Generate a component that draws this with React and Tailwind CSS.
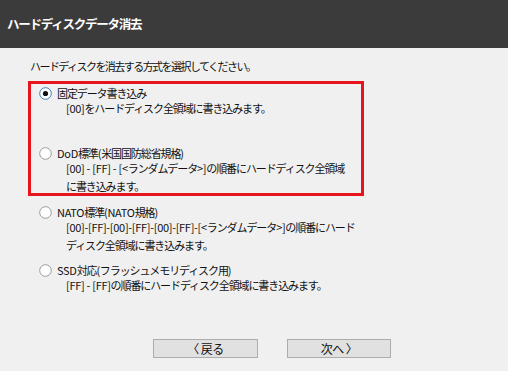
import React from "react";

const font = { fontFamily: '"Noto Sans CJK JP", "Noto Sans", sans-serif' };

function T({ children }) {
  const parts = children.split(/([\x20-\x7e]+)/).filter(Boolean);
  return (
    <>
      {parts.map((p, i) =>
        /^[\x20-\x7e]+$/.test(p) ? (
          <span key={i} className="tracking-[-0.3px] whitespace-pre">{p}</span>
        ) : (
          <span key={i}>{p}</span>
        )
      )}
    </>
  );
}

function Radio({ checked }) {
  return (
    <svg width="13" height="13" viewBox="0 0 13 13" className="shrink-0">
      <circle cx="6.5" cy="6.5" r="5.8" fill="#ffffff" stroke={checked ? "#3c7fb1" : "#9a9a9a"} strokeWidth="1" />
      {checked && <circle cx="6.5" cy="6.5" r="2.6" fill="#111111" />}
    </svg>
  );
}

function Option({ checked, label, lines }) {
  return (
    <div className="flex flex-col">
      <div className="flex items-center h-[12px] gap-[5px]">
        <Radio checked={checked} />
        <span className="text-[11px] leading-[12px] tracking-[-1.1px] text-[#111] whitespace-nowrap"><T>{label}</T></span>
      </div>
      {lines.map((l, i) => (
        <div key={i} className="pl-[27px] h-[18px] flex items-center text-[11px] tracking-[-1.1px] text-[#111] whitespace-nowrap">
          <span><T>{l}</T></span>
        </div>
      ))}
    </div>
  );
}

export default function App() {
  return (
    <div style={font} className="w-[508px] h-[371px] bg-[#f0f0f0] flex flex-col overflow-hidden">
      <div className="h-[48px] bg-[#3b3b3b] flex items-center pl-[7px]">
        <span className="text-white text-[12.5px] font-bold tracking-[-0.1em]">ハードディスクデータ消去</span>
      </div>
      <div className="flex flex-col pl-[28px]">
        <div className="h-[33px] flex items-end pl-[2px] pb-[7px] text-[11px] tracking-[-1.55px] text-[#111]">
          ハードディスクを消去する方式を選択してください。
        </div>
        <div className="w-[336px] h-[115px] border-[3px] border-[#e8141c] box-border pl-[8px] pt-[3px] flex flex-col gap-[30px]">
          <Option checked label="固定データ書き込み" lines={["[00]をハードディスク全領域に書き込みます。"]} />
          <Option
            label="DoD標準(米国国防総省規格)"
            lines={["[00] - [FF] - [<ランダムデータ>]の順番にハードディスク全領域", "に書き込みます。"]}
          />
        </div>
        <div className="pl-[11px] pt-[10px] flex flex-col gap-[10px]">
          <Option
            label="NATO標準(NATO規格)"
            lines={["[00]-[FF]-[00]-[FF]-[00]-[FF]-[<ランダムデータ>]の順番にハード", "ディスク全領域に書き込みます。"]}
          />
          <Option label="SSD対応(フラッシュメモリディスク用)" lines={["[FF] - [FF]の順番にハードディスク全領域に書き込みます。"]} />
        </div>
      </div>
      <div className="mt-[45px] pl-[153px] flex gap-[29px]">
        <div className="w-[105px] h-[19px] border border-[#adadad] bg-[#e1e1e1] flex items-center justify-center text-[12px] tracking-[-0.5px] text-[#111]">
          〈 戻る
        </div>
        <div className="w-[104px] h-[19px] border border-[#adadad] bg-[#e1e1e1] flex items-center justify-center text-[12px] tracking-[-0.5px] text-[#111]">
          次へ 〉
        </div>
      </div>
    </div>
  );
}
